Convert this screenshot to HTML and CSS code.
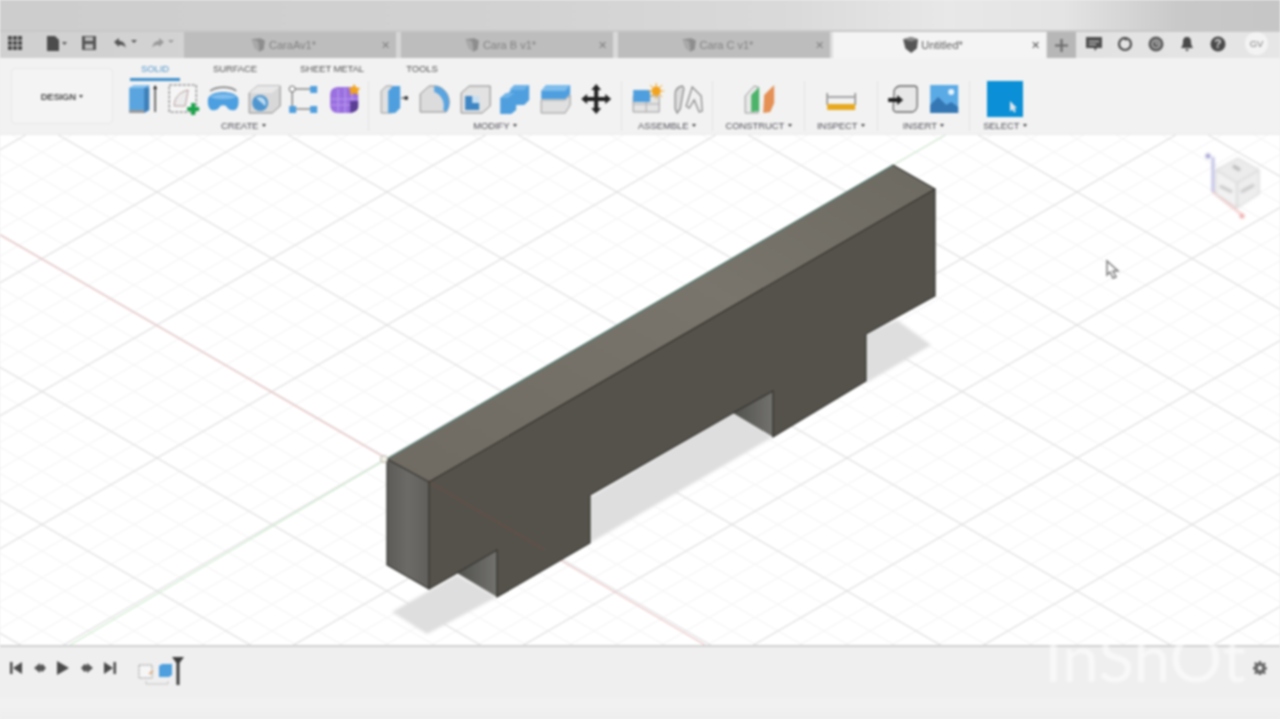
FILE: index.html
```html
<!DOCTYPE html>
<html lang="en">
<head>
<meta charset="utf-8">
<title>Untitled - Fusion</title>
<link rel="stylesheet" href="styles.css">
</head>
<body>
<div class="app">
  <div class="topblur"></div>
  <header class="tabbar">
    <div class="quick">
      <svg class="q-grid" viewBox="0 0 14 14"><path d="M0 0h4v4H0zM5 0h4v4H5zM10 0h4v4h-4zM0 5h4v4H0zM5 5h4v4H5zM10 5h4v4h-4zM0 10h4v4H0zM5 10h4v4H5zM10 10h4v4h-4z" fill="#4c4c4c"/></svg>
      <svg class="q-file" viewBox="0 0 20 15"><path d="M0 0h8l4 4v11H0z" fill="#4c4c4c"/><path d="M15 6h5l-2.500 3z" fill="#555"/></svg>
      <svg class="q-save" viewBox="0 0 14 14"><path d="M0 0h14v14H0z" fill="#555"/><path d="M3 1h8v4H3zM3 8h8v5H3z" fill="#bbb"/></svg>
      <svg class="q-undo" viewBox="0 0 24 12"><path d="M1 5l5-4v3c4 0 6 2 7 7-2-3-4-3-7-3v2z" fill="#555"/><path d="M18 3h6l-3 3z" fill="#555"/></svg>
      <svg class="q-redo" viewBox="0 0 24 12"><path d="M14 5L9 1v3c-4 0-6 2-7 7 2-3 4-3 7-3v2z" fill="#999"/><path d="M18 3h6l-3 3z" fill="#999"/></svg>
    </div>
    <div class="doc-tab">
      <svg class="cube" viewBox="0 0 14 14"><path d="M1 2l8-1 4 2-1 8-4 2-1-9z" fill="#8d8d8d"/><path d="M1 2l6 2 1 9-4-3z" fill="#a9a9a9"/></svg>
      <span class="doc-name">CaraAv1*</span><span class="doc-x">✕</span>
    </div>
    <div class="doc-tab">
      <svg class="cube" viewBox="0 0 14 14"><path d="M1 2l8-1 4 2-1 8-4 2-1-9z" fill="#8d8d8d"/><path d="M1 2l6 2 1 9-4-3z" fill="#a9a9a9"/></svg>
      <span class="doc-name">Cara B v1*</span><span class="doc-x">✕</span>
    </div>
    <div class="doc-tab">
      <svg class="cube" viewBox="0 0 14 14"><path d="M1 2l8-1 4 2-1 8-4 2-1-9z" fill="#8d8d8d"/><path d="M1 2l6 2 1 9-4-3z" fill="#a9a9a9"/></svg>
      <span class="doc-name">Cara C v1*</span><span class="doc-x">✕</span>
    </div>
    <div class="doc-tab active">
      <svg class="cube" viewBox="0 0 14 14"><path d="M1 2l7-2 6 2-1 8-5 4-5-4z" fill="#555"/><path d="M1 2l7 2 6-2-6-2z" fill="#8a8a8a"/></svg>
      <span class="doc-name">Untitled*</span><span class="doc-x">✕</span>
    </div>
    <div class="plus"><svg viewBox="0 0 12 12"><path d="M5 0h2v5h5v2H7v5H5V7H0V5h5z" fill="#6a6a6a"/></svg></div>
    <div class="right-icons">
      <svg class="ri" viewBox="0 0 16 16"><path d="M0 1h16v11h-5l-2 3-1-3H0z" fill="#4f4f4f"/><path d="M3 5h10v1H3zM3 8h7v1H3z" fill="#ddd"/></svg>
      <svg class="ri" viewBox="0 0 16 16"><circle cx="8" cy="8" r="6" fill="none" stroke="#4a4a4a" stroke-width="2.200"/><path d="M4 2l5-1 1 4z" fill="#4a4a4a"/></svg>
      <svg class="ri" viewBox="0 0 16 16"><circle cx="8" cy="8" r="7.500" fill="#5c5c5c"/><circle cx="8" cy="8" r="4" fill="none" stroke="#ddd"/><path d="M8 5.500V8h2.500" fill="none" stroke="#ddd"/></svg>
      <svg class="ri" viewBox="0 0 16 16"><path d="M8 1c3 0 4 2 4 5 0 3 1 4 2 6H2c1-2 2-3 2-6 0-3 1-5 4-5zM6 13h4l-2 2.500z" fill="#4a4a4a"/></svg>
      <svg class="ri" viewBox="0 0 16 16"><circle cx="8" cy="8" r="7.500" fill="#4a4a4a"/><text x="8" y="12" class="help">?</text></svg>
      <div class="avatar">GV</div>
    </div>
  </header>

  <section class="toolbar">
    <button class="design">DESIGN <i class="caret"></i></button>
    <div class="ribbon">
      <nav class="ribbon-tabs">
        <span class="rt on">SOLID</span>
        <span class="rt">SURFACE</span>
        <span class="rt">SHEET METAL</span>
        <span class="rt">TOOLS</span>
      </nav>
      <div class="groups">
        <div class="group g1">
          <div class="icons">
            <svg class="ti" viewBox="0 0 40 32"><path d="M7 5l5-3h15v25l-5 3H7z" fill="#5aa5e0"/><path d="M22 5h5v22l-5 3z" fill="#3f7fb8"/><path d="M7 5h15l5-3H12z" fill="#8cc4ee"/><path d="M7 27h15v3H7z" fill="#999"/><path d="M33 3v26" stroke="#444" stroke-width="1.500"/><path d="M31 6l2-4 2 4z" fill="#222"/></svg>
            <svg class="ti" viewBox="0 0 40 32"><path d="M6 2h27v27H6z" fill="#f6f6f6" stroke="#666" stroke-dasharray="3 1.500"/><path d="M11 23c0-8 5-14 14-16l-3 16z" fill="#ececec" stroke="#a88" stroke-width=".8"/><path d="M28 20h4v4h4v4h-4v4h-4v-4h-4v-4h4z" fill="#1aa34a"/></svg>
            <svg class="ti" viewBox="0 0 40 32"><path d="M5 15c4-8 26-8 30 0 1 5 0 10-3 12-4 1-7 0-9-4-2-1-4-1-6 0-2 4-5 5-9 4-3-2-4-7-3-12z" fill="#4c9fe0"/><path d="M7 8c6-5 21-5 26 0" fill="none" stroke="#777" stroke-width="1.500"/><path d="M7 14c5-4 21-4 26 0-5 3-21 3-26 0z" fill="#7fbdec"/></svg>
            <svg class="ti" viewBox="0 0 40 32"><path d="M5 10l8-7h23v20l-8 7H5z" fill="#d8d8d8" stroke="#8a8a8a"/><path d="M5 10l8-7h23l-8 7z" fill="#e8e8e8"/><circle cx="16" cy="20" r="8" fill="#4f96cf"/><path d="M12 15l9 8c2-4-1-9-6-9z" fill="#bcdcf2"/></svg>
            <svg class="ti" viewBox="0 0 40 32"><path d="M9 6h19M8 8v16M12 26h16" stroke="#555" fill="none"/><circle cx="8" cy="6" r="3" fill="#fff" stroke="#666"/><path d="M26 3h7v7h-7zM5 23h7v7H5zM26 23h7v7h-7z" fill="#4f9fdf"/></svg>
            <svg class="ti" viewBox="0 0 40 32"><path d="M6 12c0-6 4-8 9-8h13c4 0 6 4 6 8v10c0 5-4 8-9 8H14c-5 0-8-3-8-8z" fill="#9a6fe0"/><path d="M7 16h26M7 22h26M14 6v23M21 5v25M28 6v23" stroke="#b99aee" stroke-width="1.200"/><path d="M26 18h8v6c0 3-3 5-8 6z" fill="#5b3f94"/><path d="M30 1l2 3.500 4 .5-2.500 3 .5 4-4-2-4 2 .5-4L24 5l4-.5z" fill="#f2a31e"/></svg>
          </div>
          <span class="g-label">CREATE <i class="caret"></i></span>
        </div>
        <div class="group g2">
          <div class="icons">
            <svg class="ti" viewBox="0 0 40 32"><path d="M7 8l5-5h6v27H7z" fill="#e0e0e0" stroke="#9a9a9a"/><path d="M14 8l5-5h7v22l-5 5h-7z" fill="#4f9fdf"/><circle cx="32" cy="15" r="2" fill="#333"/><path d="M27 15h4" stroke="#333"/></svg>
            <svg class="ti" viewBox="0 0 40 32"><path d="M6 29V11l9-8h7c7 1 13 8 13 16 0 4-1 7-3 10z" fill="#dcdcdc" stroke="#8c8c8c"/><path d="M20 3c8 0 15 7 15 16 0 4-1 7-3 10l-3-2c2-7-1-15-9-18z" fill="#5aa5e0"/></svg>
            <svg class="ti" viewBox="0 0 40 32"><path d="M6 10l8-7h21v20l-8 7H6z" fill="#e2e2e2" stroke="#888"/><path d="M10 13h14v14H10z" fill="#c8dff2"/><path d="M10 13h7v7h7v7H10z" fill="#3f87c4"/></svg>
            <svg class="ti" viewBox="0 0 40 32"><path d="M13 10l5-5 1-3h15v15l-5 5h-8v5l-5 4H5V15l6-5z" fill="#4f9fdf"/><path d="M19 2h15l-5 5H14z" fill="#6fb3e8"/><path d="M5 15l6-5h8l-6 5z" fill="#6fb3e8"/></svg>
            <svg class="ti" viewBox="0 0 40 32"><path d="M6 8l5-6h24v9l-5 5H6z" fill="#4f9fdf"/><path d="M6 8l5-6h24l-5 6z" fill="#7ebdec"/><path d="M6 17h24l5-5v10l-5 8H6z" fill="#e0e0e0" stroke="#999"/></svg>
            <svg class="ti" viewBox="0 0 40 32"><path d="M20 1l5 6h-3v7h7v-3l6 5-6 5v-3h-7v7h3l-5 6-5-6h3v-7h-7v3l-6-5 6-5v3h7V7h-3z" fill="#222"/></svg>
          </div>
          <span class="g-label">MODIFY <i class="caret"></i></span>
        </div>
        <div class="group g3">
          <div class="icons">
            <svg class="ti" viewBox="0 0 40 32"><path d="M6 13h26v16H6z" fill="#e4e4e4" stroke="#999"/><path d="M19 13v16M6 21h26" stroke="#aaa"/><path d="M6 7h17v12H6z" fill="#4f9fdf"/><circle cx="29" cy="8" r="4.500" fill="#f2a31e"/><path d="M29 0v16M21 8h16M23 2l12 12M35 2L23 14" stroke="#f2a31e" stroke-width="1"/></svg>
            <svg class="ti" viewBox="0 0 40 32"><path d="M8 26V11c0-4 3-7 7-8 2 1 2 3 1 6l-3 17-3 4z" fill="#ddd" stroke="#8a8a8a" stroke-width="1.300"/><path d="M19 23l6-19 9 9 1 15-3 1-5-12-5 8z" fill="#f0f0f0" stroke="#8a8a8a" stroke-width="1.300"/></svg>
          </div>
          <span class="g-label">ASSEMBLE <i class="caret"></i></span>
        </div>
        <div class="group g4">
          <div class="icons">
            <svg class="ti" viewBox="0 0 40 32"><path d="M7 30V13l9-10 4 1v26z" fill="#e8e8e8" stroke="#999"/><path d="M13 29V12l8-8v24z" fill="#4cb36a"/><path d="M25 30l1-18 10-10v18l-4 9z" fill="#e59055"/></svg>
          </div>
          <span class="g-label">CONSTRUCT <i class="caret"></i></span>
        </div>
        <div class="group g5">
          <div class="icons">
            <svg class="ti" viewBox="0 0 40 32"><path d="M6 10v12M34 10v12M7 14h26" stroke="#555" fill="none"/><path d="M6 21h28v6H6z" fill="#e8a91f"/></svg>
          </div>
          <span class="g-label">INSPECT <i class="caret"></i></span>
        </div>
        <div class="group g6">
          <div class="icons">
            <svg class="ti" viewBox="0 0 40 32"><path d="M11 7c2-3 4-4 6-4h14c2 0 3 1 3 3v17c0 3-3 6-5 6H13c-2 0-3-2-3-3z" fill="#e8e8e8" stroke="#666" stroke-width="1.300"/><path d="M14 12l6 5-6 5v-3H5v-4h9z" fill="#222"/></svg>
            <svg class="ti" viewBox="0 0 40 32"><path d="M6 2h28v28H6z" fill="#5aaae6"/><path d="M6 30V22l8-8 8 8 5-3 7 5v6z" fill="#3477b4"/><circle cx="27" cy="9" r="3" fill="#e8f4fc"/></svg>
          </div>
          <span class="g-label">INSERT <i class="caret"></i></span>
        </div>
        <div class="group g7">
          <div class="icons">
            <svg class="sel" viewBox="0 0 36 36"><path d="M0 0h36v36H0z" fill="#0b8fd6"/><path d="M23 20l7 7-2.500.5 1.500 3-2 1-1.500-3-2.500 2z" fill="#dfe6ec"/></svg>
          </div>
          <span class="g-label">SELECT <i class="caret"></i></span>
        </div>
      </div>
    </div>
  </section>

  <main class="viewport">
    <svg class="scene" viewBox="0 135 1280 510" preserveAspectRatio="none">
      <defs>
        <pattern id="grid" patternUnits="userSpaceOnUse" width="230" height="133" x="157" y="192">
          <g stroke="#f2f2f3" stroke-width="1">
            <path d="M0 26.600L230 159.600M0 53.200L230 186.200M0 79.800L230 212.800M0 106.400L230 239.400M0 -106.400L230 26.600M0 -79.800L230 53.200M0 -53.200L230 79.800M0 -26.600L230 106.400"/>
            <path d="M0 26.600L230 -106.400M0 53.200L230 -79.800M0 79.800L230 -53.200M0 106.400L230 -26.600M0 159.600L230 26.600M0 186.200L230 53.200M0 212.800L230 79.800M0 239.400L230 106.400"/>
          </g>
          <g stroke="#e1e0e2" stroke-width="1.200">
            <path d="M0 0L230 133M0 133L230 0"/>
          </g>
        </pattern>
        <linearGradient id="topface" x1="0" y1="1" x2="1" y2="0">
          <stop offset="0" stop-color="#6f6b62"/>
          <stop offset=".6" stop-color="#79756c"/>
          <stop offset="1" stop-color="#6d6a61"/>
        </linearGradient>
        <linearGradient id="endface" x1="0" y1="0" x2="1" y2="0">
          <stop offset="0" stop-color="#5c5b58"/>
          <stop offset=".5" stop-color="#6c6b68"/>
          <stop offset="1" stop-color="#605f5b"/>
        </linearGradient>
        <linearGradient id="notch" x1="0" y1="0" x2="1" y2="0">
          <stop offset="0" stop-color="#50504c"/>
          <stop offset="1" stop-color="#73726e"/>
        </linearGradient>
        <filter id="soft"><feGaussianBlur stdDeviation="1.500"/></filter>
      </defs>
      <rect x="0" y="135" width="1280" height="510" fill="#fff"/>
      <rect x="0" y="135" width="1280" height="510" fill="url(#grid)"/>
      <path d="M0 235L387 459" stroke="#ecc4c4" stroke-width="1.200"/>
      <path d="M560 560L705 645" stroke="#ecc4c4" stroke-width="1.200"/>
      <path d="M70 645L387 459" stroke="#cdeccd" stroke-width="1.200"/>
      <path d="M893 165L945 135" stroke="#d6efd6" stroke-width="1.200"/>
      <g fill="#dedede" filter="url(#soft)">
        <path d="M392 612L457 575L497 597L427 634z"/>
        <path d="M590 497L733 412L773 437L590 543z"/>
        <path d="M866 333L897 320L931 345L866 383z"/>
      </g>
      <path d="M387 459L893 165L935 189L429 482z" fill="url(#topface)"/>
      <path d="M387 459L429 482V589L387 565z" fill="url(#endface)"/>
      <path d="M429 482L935 189V296L866 334V381L773 437V391L733 413L590 495V543L497 597V550L457 573L429 589z" fill="#55524b"/>
      <path d="M497 550L457 573L497 597z" fill="url(#notch)"/>
      <path d="M773 391L733 413L773 437z" fill="url(#notch)"/>
      <path d="M429 482L545 550" stroke="#6b4f48" stroke-width="1.200" fill="none"/>
      <path d="M387 459L893 165" stroke="#4d7a70" stroke-width="1.200" fill="none"/>
      <path d="M429 482L935 189V296L866 334V381L773 437V391L733 413L590 495V543L497 597V550L457 573L429 589V482M429 589L387 565V459L429 482M893 165L935 189" stroke="#33322e" stroke-width="1.200" fill="none"/>
      <circle cx="384" cy="459" r="3.500" fill="#f4f1ea" stroke="#b9b5a8"/>
      <g class="viewcube">
        <path d="M1213 192V157" stroke="#b3b3e0" stroke-width="2.500"/>
        <path d="M1213 192L1241 214" stroke="#f0bcbc" stroke-width="2"/>
        <circle cx="1208" cy="156" r="2.500" fill="#9c9cd0"/>
        <circle cx="1242" cy="216" r="2.500" fill="#eda8a8"/>
        <path d="M1216 170L1238 158L1259 170L1237 183z" fill="#ececec" stroke="#cfcfcf"/>
        <path d="M1216 170L1237 183V208L1216 194z" fill="#f2f2f2" stroke="#cfcfcf"/>
        <path d="M1237 183L1259 170V194L1237 208z" fill="#eeeeee" stroke="#cfcfcf"/>
        <path d="M1233 166l7 4" stroke="#b0b0b0" stroke-width="3"/>
        <path d="M1220 186l12 6" stroke="#c4c4c4" stroke-width="3"/>
        <path d="M1241 192l13-7" stroke="#c4c4c4" stroke-width="3"/>
      </g>
      <path d="M1107 261V275L1110 272L1113 278L1116 277L1113 271H1118z" fill="#fff" stroke="#808080" stroke-width="1.500"/>
    </svg>
  </main>

  <footer class="timeline">
    <div class="controls">
      <svg class="ctl" viewBox="0 0 14 14"><path d="M1 1h2.500v12H1zM13 1v12L4 7z" fill="#4a4a4a"/></svg>
      <svg class="ctl" viewBox="0 0 14 14"><path d="M1 7l6-5v2.500L9.500 3 13 7l-3.500 4L7 9.500V12z" fill="#555"/></svg>
      <svg class="ctl" viewBox="0 0 14 14"><path d="M1 0l12 7-12 7z" fill="#4a4a4a"/></svg>
      <svg class="ctl" viewBox="0 0 14 14"><path d="M13 7L7 2v2.500L4.500 3 1 7l3.500 4L7 9.500V12z" fill="#555"/></svg>
      <svg class="ctl" viewBox="0 0 14 14"><path d="M10.500 1H13v12h-2.500zM1 1v12l9-6z" fill="#4a4a4a"/></svg>
    </div>
    <svg class="steps" viewBox="0 0 50 32">
      <path d="M7 8h13v13H7z" fill="#f6f6f6" stroke="#9a9a9a" stroke-dasharray="2.500 1"/>
      <path d="M17 17l4-3" stroke="#e0a060" stroke-width="1.500"/>
      <path d="M14 24v3h22v-3" stroke="#c4c4c4" fill="none"/>
      <path d="M27 9l3-2h10v11l-3 2H27z" fill="#4f9fdf"/>
      <path d="M40 0h12l-4.500 6v22h-3V6z" fill="#3c3c3c"/>
    </svg>
    <svg class="gear" viewBox="0 0 14 14"><path d="M6 0h2l.400 2 1.400.600 1.700-1.100 1.400 1.400-1.100 1.700.600 1.400 2 .400v2l-2 .400-.600 1.400 1.100 1.700-1.400 1.400-1.700-1.100-1.400.600-.400 2H6l-.400-2-1.400-.600-1.700 1.100-1.400-1.400 1.100-1.700-.600-1.400-2-.400V6l2-.400.600-1.400-1.100-1.700 1.400-1.400 1.700 1.100 1.400-.600z" fill="#6a6a6a"/><circle cx="7" cy="7" r="2.200" fill="#efefef"/></svg>
  </footer>
  <div class="watermark">InShOt</div>
</div>
</body>
</html>
```

FILE: styles.css
```css
* { box-sizing: border-box; }
html, body { margin: 0; padding: 0; height: 100%; overflow: hidden; background: #efefef; }
.app {
  position: relative;
  width: 1280px;
  height: 719px;
  display: flex;
  flex-direction: column;
  font-family: "Liberation Sans", Arial, sans-serif;
  color: #666;
  filter: blur(0.8px);
  overflow: hidden;
}
.topblur {
  height: 32px;
  flex: none;
  background: linear-gradient(90deg, #cdcdcd 0%, #d2d2d2 40%, #dadada 62%, #e8e8e8 74%, #e4e4e4 83%, #c9c9c9 92%, #c6c6c6 100%);
  border-bottom: 2px solid #c8c8c8;
}
.tabbar {
  height: 26px;
  flex: none;
  display: flex;
  align-items: stretch;
  background: linear-gradient(90deg, #d0d0d0, #dcdcdc 60%, #e6e6e6);
}
.quick { width: 184px; flex: none; display: flex; align-items: center; padding: 0 0 4px 8px; }
.q-grid { width: 14px; height: 14px; margin-right: 25px; }
.q-file { width: 20px; height: 15px; margin-right: 15px; }
.q-save { width: 14px; height: 14px; margin-right: 17px; }
.q-undo { width: 24px; height: 12px; margin-right: 13px; }
.q-redo { width: 24px; height: 12px; }
.doc-tab {
  width: 212px;
  flex: none;
  margin-right: 5px;
  display: flex;
  align-items: center;
  justify-content: center;
  position: relative;
  padding: 0 14px 1px 0;
  background: #bdbdbd;
  font-size: 11px;
  color: #808080;
}
.doc-tab:nth-of-type(4) { margin-right: 3px; }
.doc-tab.active { width: 213px; margin-right: 1px; background: #f4f4f4; color: #5c5c5c; }
.cube { width: 16px; height: 16px; margin-right: 3px; }
.doc-x { position: absolute; right: 6px; top: 7px; font-size: 11px; color: #808080; }
.active .doc-x { color: #555; }
.plus { width: 29px; flex: none; background: #b7b7b7; display: flex; align-items: center; justify-content: center; }
.plus svg { width: 13px; height: 13px; }
.right-icons { flex: 1; display: flex; align-items: center; padding: 0 0 3px 10px; }
.ri { width: 16px; height: 16px; margin-right: 15px; flex: none; }
.help { font: bold 12px "Liberation Sans", sans-serif; fill: #ddd; text-anchor: middle; }
.avatar {
  width: 23px;
  height: 23px;
  margin-left: 4px;
  border-radius: 50%;
  background: #f3f3f3;
  display: flex;
  align-items: center;
  justify-content: center;
  font-size: 9.5px;
  color: #808080;
}
.toolbar {
  height: 77px;
  flex: none;
  display: flex;
  align-items: flex-start;
  padding-left: 11px;
  background: #f2f2f2;
  border-bottom: 1px solid #ececec;
}
.design {
  width: 102px;
  height: 56px;
  margin: 10px 6px 0 0;
  flex: none;
  padding: 0;
  font: bold 9.5px "Liberation Sans", sans-serif;
  letter-spacing: -0.2px;
  color: #4e4e4e;
  background: #f4f4f4;
  border: 1px solid #e8e8e8;
  border-radius: 4px;
}
.caret {
  display: inline-block;
  width: 0;
  height: 0;
  margin-left: 1px;
  vertical-align: 2px;
  border-left: 2.5px solid transparent;
  border-right: 2.5px solid transparent;
  border-top: 3px solid #444;
}
.ribbon { flex: 1; display: flex; flex-direction: column; }
.ribbon-tabs {
  display: grid;
  grid-template-columns: 50px 110px 84px 96px;
  height: 23px;
  margin-left: 11px;
  font-size: 9.5px;
  letter-spacing: -0.1px;
  color: #505050;
}
.rt { display: flex; align-items: flex-start; justify-content: center; padding-top: 5px; white-space: nowrap; }
.rt.on { color: #5096cc; border-bottom: 3px solid #3f8fcc; }
.groups { display: flex; height: 52px; }
.group {
  flex: none;
  display: flex;
  flex-direction: column;
  align-items: center;
  border-right: 1px solid #e4e4e4;
  height: 50px;
}
.g1 { width: 250px; }
.g2 { width: 253px; }
.g3 { width: 91px; }
.g4 { width: 92px; }
.g5 { width: 73px; }
.g6 { width: 92px; }
.g7 { width: 70px; border-right: 0; }
.icons { display: flex; height: 36px; align-items: center; }
.ti { width: 40.4px; height: 32px; flex: none; overflow: visible; }
.sel { width: 36px; height: 36px; flex: none; }
.g-label { font-size: 9.5px; color: #50505a; white-space: nowrap; margin-top: 3px; letter-spacing: -0.1px; }
.viewport { flex: none; height: 510px; background: #fff; }
.scene { display: block; width: 1280px; height: 510px; }
.viewcube { filter: blur(0.8px); }
.timeline {
  flex: 1;
  position: relative;
  display: flex;
  align-items: flex-start;
  padding-top: 14px;
  background: linear-gradient(180deg, #efefef 0 68%, #f2f2f2 76%, #eeeeee 100%);
  border-top: 2px solid #d2d2d2;
}
.controls { display: flex; align-items: center; margin-left: 9px; gap: 9.5px; height: 14px; }
.ctl { width: 14px; height: 14px; flex: none; }
.steps { width: 52px; height: 32px; margin: -4px 0 0 14px; flex: none; overflow: visible; }
.gear { position: absolute; right: 13px; top: 14px; width: 14px; height: 14px; }
.watermark {
  position: absolute;
  left: 1044px;
  top: 624px;
  font: 400 66px/1 Lato, "Liberation Sans", sans-serif;
  color: rgba(255, 255, 255, 0.6);
  filter: blur(1px);
}
```
